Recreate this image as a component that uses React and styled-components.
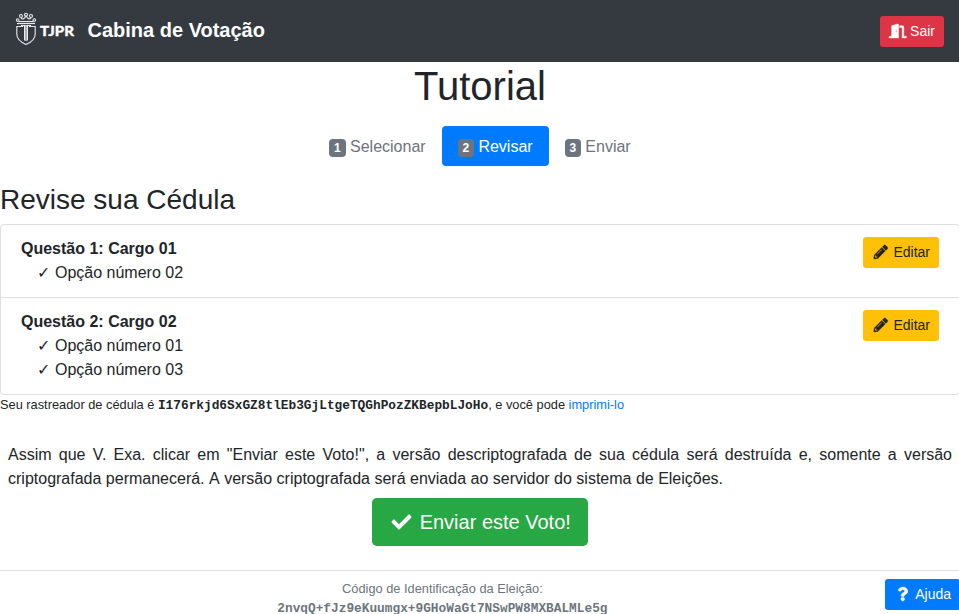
import React from "react";
import styled, { createGlobalStyle } from "styled-components";
import { FaCheck, FaDoorOpen, FaPencilAlt, FaQuestion } from "react-icons/fa";

const GlobalStyle = createGlobalStyle`
  *, *::before, *::after { box-sizing: border-box; }
  html, body { margin: 0; overflow: hidden; }
  body {
    height: 614px;
    font: 400 16px/1.5 "Liberation Sans", Arial, sans-serif;
    color: #212529;
    background: #fff;
  }
`;

const Page = styled.div`
  width: 960px;
`;

const Navbar = styled.nav`
  display: flex;
  align-items: center;
  height: 62px;
  padding: 0 16px 0 15px;
  background: #343a40;
  color: #fff;
`;

const Logo = styled.svg`
  display: block;
  width: 60px;
  height: 34px;
  margin: -4px 12.5px 0 0;
`;

const Brand = styled.span`
  font-size: 20px;
  font-weight: 700;
  line-height: 30px;
  margin-right: auto;
  margin-top: -2px;
`;

const tones = {
  danger: ["#dc3545", "#fff"],
  warning: ["#ffc107", "#212529"],
  success: ["#28a745", "#fff"],
  primary: ["#007bff", "#fff"],
};

const Button = styled.button`
  display: inline-flex;
  align-items: center;
  justify-content: center;
  flex: none;
  gap: ${(p) => (p.$large ? "5.5px" : "3.9px")};
  height: ${(p) => (p.$large ? "48px" : "31px")};
  padding: 0 ${(p) => (p.$large ? "17px" : "9px")};
  border: 0;
  border-radius: ${(p) => (p.$large ? "4.8px" : "3.2px")};
  background: ${(p) => tones[p.$tone][0]};
  color: ${(p) => tones[p.$tone][1]};
  font: 400 ${(p) => (p.$large ? "20px" : "14px")}/1.5 "Liberation Sans", Arial, sans-serif;
  white-space: nowrap;
  svg {
    width: 1.25em;
    height: 1em;
    margin-bottom: ${(p) => (p.$large ? "0" : "1px")};
    stroke-width: ${(p) => (p.$large ? "0" : "14px")};
    overflow: visible;
  }
`;

const Title = styled.h1`
  margin: 0;
  font-size: 40px;
  font-weight: 400;
  line-height: 48px;
  text-align: center;
`;

const Steps = styled.ul`
  display: flex;
  justify-content: center;
  margin: 16px 0;
  padding: 0;
  list-style: none;
`;

const Step = styled.li`
  padding: 9px 16px 7px;
  height: 40px;
  border-radius: 4px;
  color: ${(p) => (p.$active ? "#fff" : "#6c757d")};
  background: ${(p) => (p.$active ? "#007bff" : "transparent")};
`;

const Badge = styled.span`
  display: inline-block;
  padding: 3px 4.8px;
  border-radius: 4px;
  background: #6c757d;
  color: #fff;
  font-size: 12px;
  font-weight: 700;
  line-height: 1;
  vertical-align: baseline;
`;

const Heading = styled.h2`
  margin: 0 0 7px;
  padding-top: 1px;
  font-size: 28px;
  font-weight: 400;
  line-height: 34px;
`;

const Ballot = styled.section`
  border: 1px solid #dfdfdf;
  border-radius: 4px;
`;

const Question = styled.div`
  display: flex;
  justify-content: space-between;
  align-items: flex-start;
  padding: 12px 20px;
  & + & { border-top: 1px solid #dfdfdf; }
`;

const Answers = styled.ul`
  margin: 0;
  padding: 0 0 0 16px;
  list-style: none;
`;

const CheckMark = styled.span`
  margin-right: 0.5px;
`;

const Tracker = styled.p`
  margin: 0;
  font-size: 12.8px;
  line-height: 20px;
  code { font: 700 12.8px "Liberation Mono", monospace; }
`;

const PrintLink = styled.a`
  color: #007bff;
`;

const Notice = styled.p`
  margin: 28px 8px 7px;
  text-align: justify;
`;

const SendRow = styled.div`
  display: flex;
  justify-content: center;
  margin-bottom: 24px;
`;

const Footer = styled.footer`
  display: flex;
  align-items: flex-start;
  height: 44px;
  padding-top: 8px;
  border-top: 1px solid #dee2e6;
`;

const Fingerprint = styled.div`
  flex: 1;
  color: #6c757d;
  font-size: 12.8px;
  line-height: 19.2px;
  text-align: center;
  code { display: block; padding-top: 1px; font: 700 12.8px/19.2px "Liberation Mono", monospace; }
`;

const Unkerned = styled.span`
  font-kerning: none;
`;

const questions = [
  { title: "Questão 1: Cargo 01", answers: ["Opção número 02"] },
  { title: "Questão 2: Cargo 02", answers: ["Opção número 01", "Opção número 03"] },
];

function CourtLogo() {
  return (
    <Logo viewBox="0 0 60 34" fill="none" stroke="#e9ebed" aria-label="TJPR">
      <g strokeWidth="1.100">
        <circle cx="2.700" cy="8" r="1.300" />
        <circle cx="6" cy="4" r="1.500" />
        <circle cx="11" cy="2.700" r="1.500" />
        <circle cx="16" cy="4" r="1.500" />
        <circle cx="19.300" cy="8" r="1.300" />
        <path d="M3.500 9.500h15M6 5.500q1 2.500 3 1l2-2.500 2 2.500q2 1.500 3-1" />
      </g>
      <path d="M2 11.500h18" strokeWidth="1.300" />
      <path d="M8 14.500H1.800v7.500q0 6.500 9.200 10.500 9.200-4 9.200-10.500v-7.500H14" strokeWidth="1.100" />
      <path d="M6 13.500h10" strokeWidth="1" />
      <path d="M9.500 13.500v15M12.500 13.500v15" strokeWidth="1" />
      <path d="M11 13.500v15.500" stroke="#aeb1b4" strokeWidth="2" />
      <text x="25" y="23.500" fill="#fff" stroke="#fff" strokeWidth=".3" fontFamily="Lato, sans-serif" fontWeight="900" fontSize="14" textLength="34" lengthAdjust="spacingAndGlyphs">TJPR</text>
    </Logo>
  );
}

export default function App() {
  return (
    <Page>
      <GlobalStyle />
      <Navbar>
        <CourtLogo />
        <Brand>Cabina de Votação</Brand>
        <Button $tone="danger"><FaDoorOpen />Sair</Button>
      </Navbar>
      <Title>Tutorial</Title>
      <Steps>
        {["Selecionar", "Revisar", "Enviar"].map((name, i) => (
          <Step key={name} $active={i === 1}><Badge>{i + 1}</Badge> {name}</Step>
        ))}
      </Steps>
      <Heading>Revise sua Cédula</Heading>
      <Ballot>
        {questions.map((q) => (
          <Question key={q.title}>
            <div>
              <strong>{q.title}</strong>
              <Answers>{q.answers.map((a) => <li key={a}><CheckMark>✓</CheckMark> {a}</li>)}</Answers>
            </div>
            <Button $tone="warning"><FaPencilAlt />Editar</Button>
          </Question>
        ))}
      </Ballot>
      <Tracker>Seu rastreador de cédula é <code>I176rkjd6SxGZ8tlEb3GjLtgeTQGhPozZKBepbLJoHo</code>, e você pode <PrintLink>imprimi-lo</PrintLink></Tracker>
      <Notice>Assim que V. Exa. clicar em "Enviar este Voto!", a versão descriptografada de sua cédula será destruída e, somente a versão criptografada permanecerá.<Unkerned> A </Unkerned>versão criptografada será enviada ao servidor do sistema de Eleições.</Notice>
      <SendRow><Button $tone="success" $large><FaCheck />Enviar este Voto!</Button></SendRow>
      <Footer>
        <Fingerprint>Código de Identificação da Eleição:<code>2nvqQ+fJz9eKuumgx+9GHoWaGt7NSwPW8MXBALMLe5g</code></Fingerprint>
        <Button $tone="primary"><FaQuestion />Ajuda</Button>
      </Footer>
    </Page>
  );
}
